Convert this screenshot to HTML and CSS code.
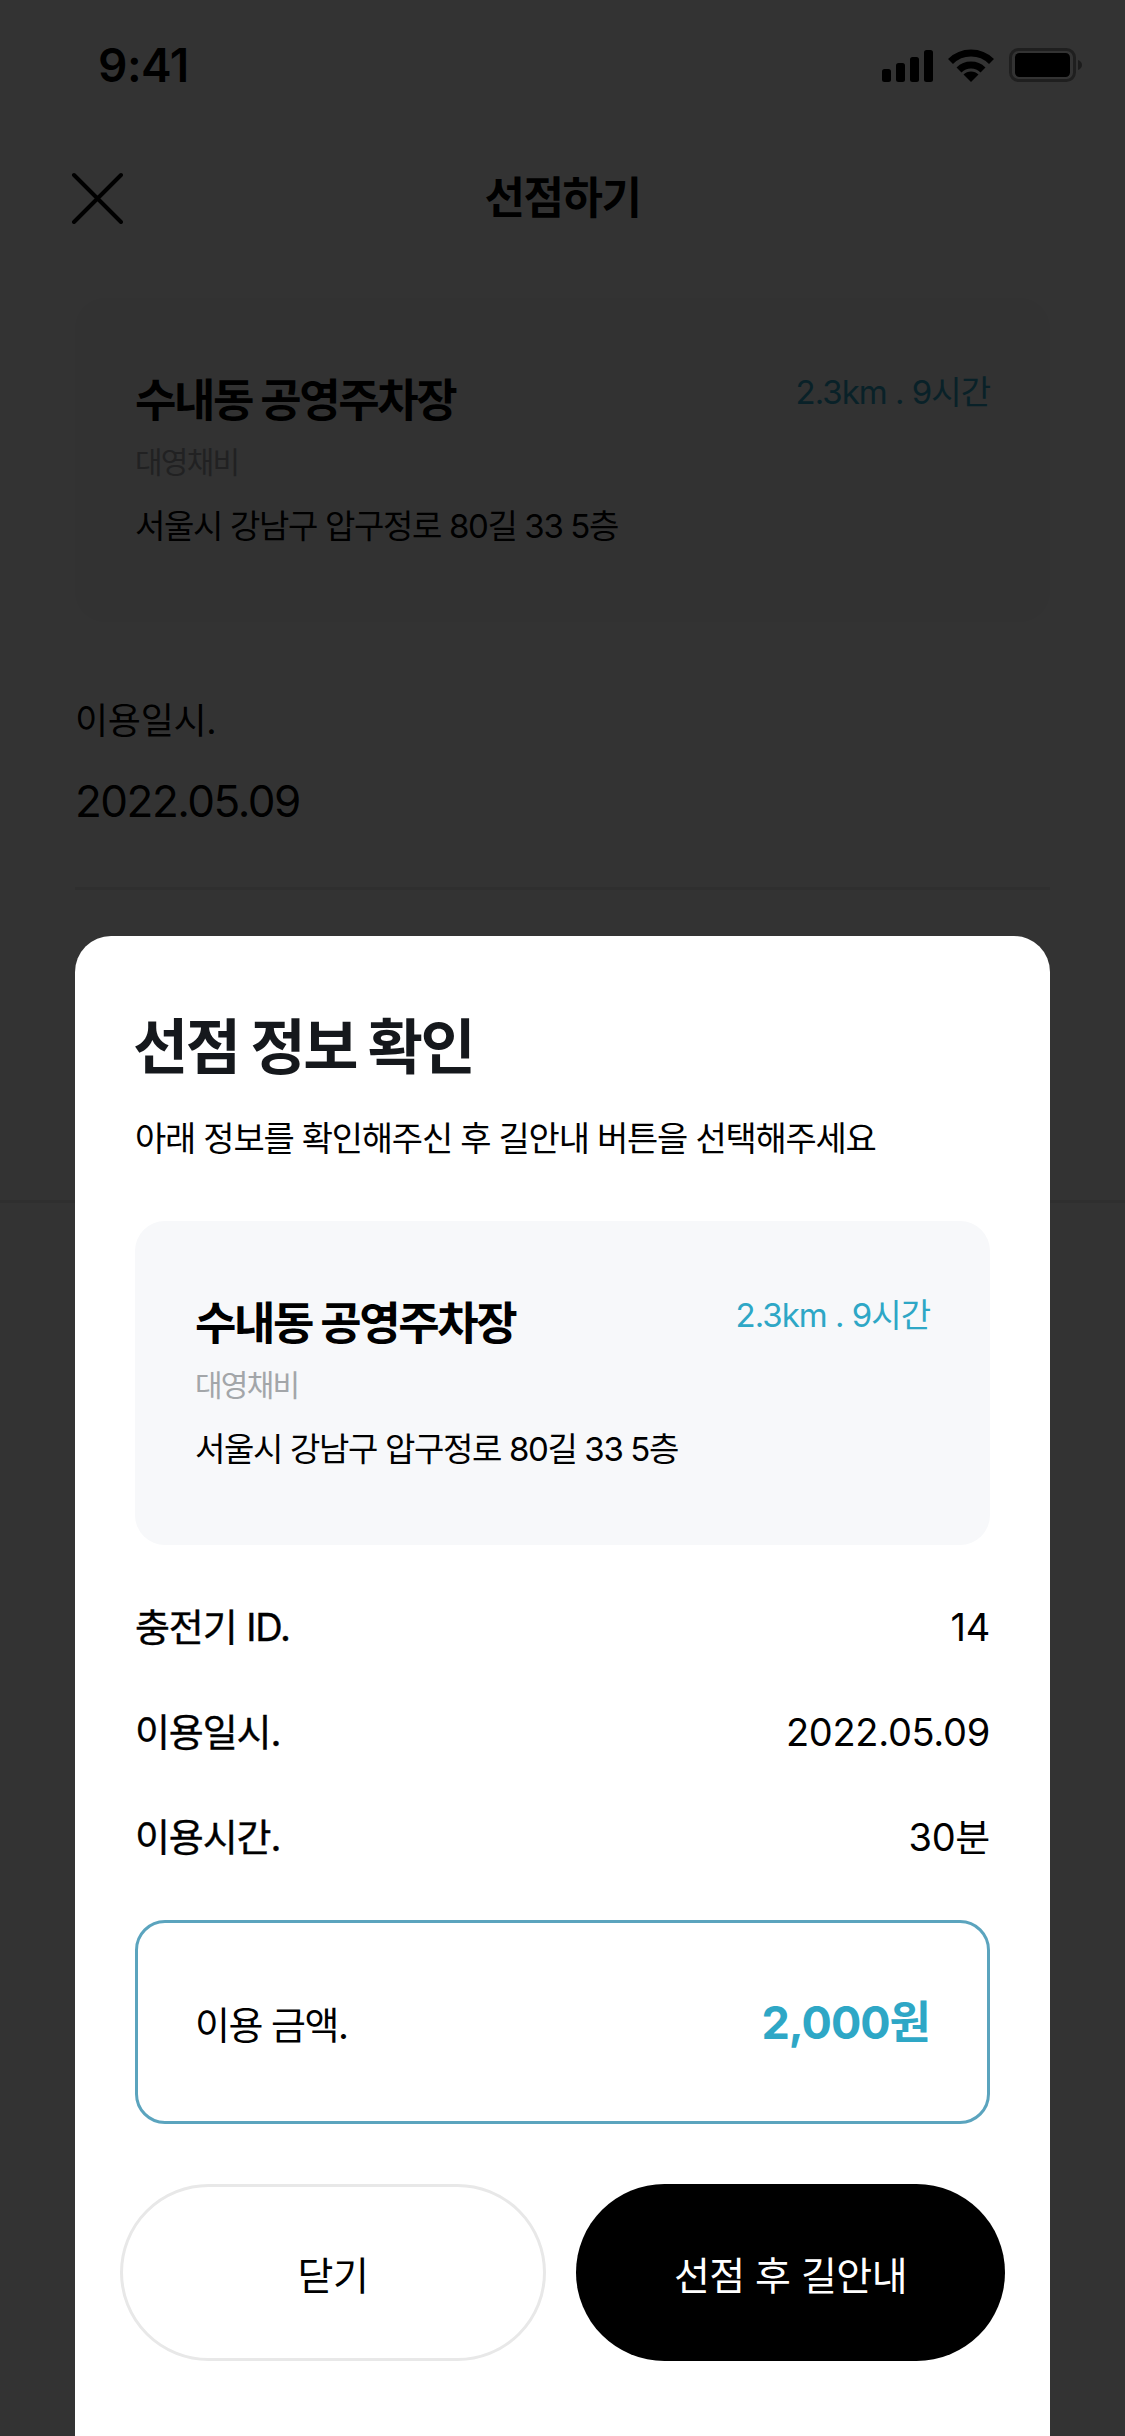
FILE: index.html
```html
<!DOCTYPE html>
<html lang="ko">
<head>
<meta charset="utf-8">
<title>선점하기</title>
<link rel="stylesheet" href="styles.css">
</head>
<body>
<div class="screen">
  <div class="status">
    <span class="time">9:41</span>
    <div class="status-icons">
      <svg class="i-signal" viewBox="0 0 51 32"><rect x="0" y="19" width="9" height="13" rx="2.5"/><rect x="14" y="13" width="9" height="19" rx="2.5"/><rect x="28" y="7" width="9" height="25" rx="2.5"/><rect x="42" y="0" width="9" height="32" rx="2.5"/></svg>
      <svg class="i-wifi" viewBox="0 0 46 34"><path d="M2.5 13.5a29 29 0 0 1 41 0" fill="none" stroke="#000" stroke-width="7"/><path d="M11 22a17 17 0 0 1 24 0" fill="none" stroke="#000" stroke-width="7"/><path d="M23 34l-7.5-7.5a10.6 10.6 0 0 1 15 0z"/></svg>
      <svg class="i-battery" viewBox="0 0 74 34"><rect x="1.5" y="1.5" width="64" height="31" rx="8" fill="none" stroke="#000" stroke-opacity=".4" stroke-width="3"/><rect x="6" y="5" width="55" height="24" rx="4.5"/><path d="M69 12c2.500.8 4 2.700 4 5s-1.500 4.200-4 5z" fill-opacity=".45"/></svg>
    </div>
  </div>
  <div class="nav">
    <svg class="i-close" viewBox="0 0 52 52"><path d="M3 3l47 47M50 3L3 50" fill="none" stroke="#000" stroke-width="4" stroke-linecap="round"/></svg>
    <h1 class="nav-title">선점하기</h1>
    <span></span>
  </div>
  <section class="place place-bg">
    <div class="place-top">
      <h2 class="place-name">수내동 공영주차장</h2>
      <span class="place-dist">2.3km . 9시간</span>
    </div>
    <p class="place-sub">대영채비</p>
    <p class="place-addr">서울시 강남구 압구정로 80길 33 5층</p>
  </section>
  <section class="field">
    <p class="field-label">이용일시.</p>
    <p class="field-value">2022.05.09</p>
  </section>
  <div class="field-empty"></div>

  <div class="overlay"></div>

  <div class="modal">
    <h2 class="modal-title">선점 정보 확인</h2>
    <p class="modal-desc">아래 정보를 확인해주신 후 길안내 버튼을 선택해주세요</p>
    <section class="place">
      <div class="place-top">
        <h3 class="place-name">수내동 공영주차장</h3>
        <span class="place-dist">2.3km . 9시간</span>
      </div>
      <p class="place-sub">대영채비</p>
      <p class="place-addr">서울시 강남구 압구정로 80길 33 5층</p>
    </section>
    <div class="rows">
      <div class="row"><span class="row-label">충전기 ID.</span><span class="row-value">14</span></div>
      <div class="row"><span class="row-label">이용일시.</span><span class="row-value">2022.05.09</span></div>
      <div class="row"><span class="row-label">이용시간.</span><span class="row-value">30분</span></div>
    </div>
    <div class="amount">
      <span class="amount-label">이용 금액.</span>
      <span class="amount-value">2,000원</span>
    </div>
    <div class="actions">
      <button class="btn btn-ghost">닫기</button>
      <button class="btn btn-solid">선점 후 길안내</button>
    </div>
  </div>
</div>
</body>
</html>
```
FILE: styles.css
```css
* { box-sizing: border-box; margin: 0; padding: 0; }
html, body { width: 1125px; height: 2436px; overflow: hidden; }
body { font-family: Inter, "Noto Sans CJK KR", sans-serif; color: #000; background: #fff; }

.screen { position: relative; width: 1125px; height: 2436px; overflow: hidden; background: #fff; }

.status { height: 130px; padding: 0 42px 0 98px; display: flex; align-items: center; justify-content: space-between; }
.time { font-size: 46px; font-weight: 600; line-height: 60px; letter-spacing: -0.5px; }
.status-icons { display: flex; align-items: center; gap: 15px; }
.i-signal { width: 51px; height: 32px; margin-top: 2px; }
.i-wifi { width: 46px; height: 34px; }
.i-battery { width: 74px; height: 34px; }

.nav { height: 136px; padding: 0 71px; display: grid; grid-template-columns: 52px 1fr 52px; align-items: center; }
.i-close { width: 52px; height: 52px; }
.nav-title { font-size: 44px; font-weight: 700; line-height: 60px; text-align: center; letter-spacing: -1.5px; }

.place { height: 324px; padding: 73px 60px 0; background: #f7f8fa; border-radius: 30px; }
.place-bg { margin: 32px 75px 0; }
.place-top { display: flex; justify-content: space-between; align-items: flex-start; }
.place-name { font-size: 45px; font-weight: 700; line-height: 60px; letter-spacing: -2.4px; }
.place-dist { font-size: 33px; font-weight: 400; line-height: 48px; color: #2ea7c6; letter-spacing: -1px; margin-top: -3px; }
.place-sub { margin-top: 7px; font-size: 30px; line-height: 48px; color: #a3a6a9; letter-spacing: -1.75px; }
.place-addr { margin-top: 16px; font-size: 33px; line-height: 48px; letter-spacing: -1.35px; }

.field { margin: 72px 75px 0; padding-bottom: 53px; }
.field-label { font-size: 36px; line-height: 54px; letter-spacing: -.3px; }
.field-value { margin-top: 20px; font-size: 44px; line-height: 66px; letter-spacing: -1.5px; }
.field, .field-empty { border-bottom: 3px solid #e8e8e8; }
.field-empty { height: 313px; }

.overlay { position: absolute; inset: 0; background: rgba(0, 0, 0, .8); }

.modal { position: absolute; left: 75px; right: 75px; top: 936px; bottom: 0; padding: 75px 60px 0; background: #fff; border-radius: 36px 36px 0 0; }
.modal-title { font-size: 60px; font-weight: 700; line-height: 72px; color: #15181c; letter-spacing: -2.4px; margin-left: -2px; }
.modal-desc { margin-top: 29px; margin-bottom: 55px; font-size: 34px; line-height: 54px; letter-spacing: -1.25px; }

.rows { margin-top: 55px; display: flex; flex-direction: column; gap: 51px; }
.row { display: flex; justify-content: space-between; align-items: center; height: 54px; font-size: 38px; line-height: 54px; }
.row-label { font-weight: 400; letter-spacing: -1.1px; -webkit-text-stroke: .4px #000; }
.row-value { font-weight: 400; letter-spacing: -.3px; }

.amount { margin-top: 56px; height: 204px; padding: 0 60px; border: 3px solid #5ba4be; border-radius: 30px; display: flex; align-items: center; justify-content: space-between; }
.amount-label { font-size: 38px; font-weight: 400; letter-spacing: -1.5px; margin-left: -3px; }
.amount-value { font-size: 45px; font-weight: 700; color: #2ea7c6; margin-right: -3px; margin-bottom: 5px; letter-spacing: -1px; }

.actions { margin: 60px -15px 0; display: flex; gap: 30px; }
.btn { height: 177px; border-radius: 89px; font: inherit; font-size: 39px; display: flex; align-items: center; justify-content: center; letter-spacing: -.5px; }
.btn-ghost { flex: 0 0 426px; background: #fff; color: #000; border: 3px solid #e8e8e8; }
.btn-solid { flex: 1 1 0; background: #000; color: #fff; border: 0; }
```
